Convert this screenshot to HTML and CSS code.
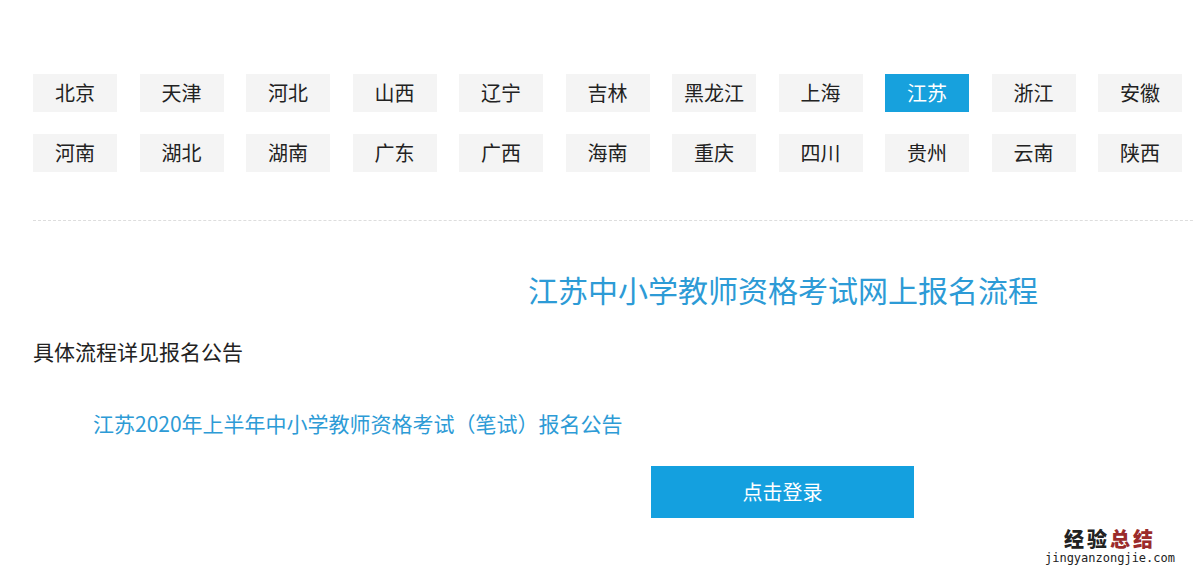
FILE: index.html
```html
<!doctype html>
<html lang="zh-CN">
    <head>
        <meta charset="UTF-8" />
        <meta name="viewport" content="width=device-width, initial-scale=1.0" />
        <title>江苏中小学教师资格考试网上报名流程</title>
        <link rel="stylesheet" href="styles.css">
    </head>
    <body>
        <div class="container">
            <div class="provinces">
                <a class="prov">北京</a>
                <a class="prov">天津</a>
                <a class="prov">河北</a>
                <a class="prov">山西</a>
                <a class="prov">辽宁</a>
                <a class="prov">吉林</a>
                <a class="prov">黑龙江</a>
                <a class="prov">上海</a>
                <a class="prov active">江苏</a>
                <a class="prov">浙江</a>
                <a class="prov">安徽</a>
                <a class="prov">河南</a>
                <a class="prov">湖北</a>
                <a class="prov">湖南</a>
                <a class="prov">广东</a>
                <a class="prov">广西</a>
                <a class="prov">海南</a>
                <a class="prov">重庆</a>
                <a class="prov">四川</a>
                <a class="prov">贵州</a>
                <a class="prov">云南</a>
                <a class="prov">陕西</a>
            </div>
            <div class="divider"></div>
            <h2 class="title">江苏中小学教师资格考试网上报名流程</h2>
            <p class="desc">具体流程详见报名公告</p>
            <p class="notice"><a>江苏2020年上半年中小学教师资格考试（笔试）报名公告</a></p>
            <div class="login-row">
                <a class="login-btn">点击登录</a>
            </div>
        </div>
        <div class="watermark">
            <div class="wm-cn">经验<span>总结</span></div>
            <div class="wm-en">jingyanzongjie.com</div>
        </div>
    </body>
</html>
```

FILE: styles.css
```css
body {
    font-family: "Noto Sans CJK SC", "Noto Sans", sans-serif;
    background-color: #fff;
    margin: 0;
    padding: 0;
    color: #222;
    overflow: hidden;
}

.container {
    padding: 74px 0 0 33px;
}

.provinces {
    display: grid;
    grid-template-columns: repeat(11, 84px);
    column-gap: 22.5px;
    row-gap: 22px;
}

.prov {
    display: block;
    height: 38px;
    line-height: 38px;
    text-align: center;
    font-size: 20px;
    background-color: #f4f4f4;
    color: #222;
}

.prov.active {
    background-color: #17a1dd;
    color: #fff;
}

.divider {
    margin-top: 48px;
    width: 1200px;
    border-top: 1px dashed #ddd;
}

.title {
    margin: 48px 0 0 495px;
    font-size: 30px;
    font-weight: 400;
    line-height: 40px;
    color: #2d9bd6;
}

.desc {
    margin: 27px 0 0;
    font-size: 21px;
    line-height: 30px;
}

.notice {
    margin: 42px 0 0 60px;
    font-size: 21px;
    line-height: 30px;
}

.notice a {
    color: #2d9bd6;
}

.login-row {
    margin-top: 28px;
    padding-left: 618px;
}

.login-btn {
    display: block;
    width: 263px;
    height: 52px;
    line-height: 52px;
    text-align: center;
    font-size: 20px;
    background-color: #14a0df;
    color: #fff;
}

.watermark {
    position: absolute;
    right: 19px;
    bottom: 10px;
    text-align: center;
}

.wm-cn {
    font-size: 20px;
    font-weight: 900;
    line-height: 22px;
    letter-spacing: 3px;
    color: #222;
}

.wm-cn span {
    color: #9b2b2b;
}

.wm-en {
    font-family: "DejaVu Sans Mono", monospace;
    font-size: 12px;
    line-height: 16px;
    color: #222;
}
```
